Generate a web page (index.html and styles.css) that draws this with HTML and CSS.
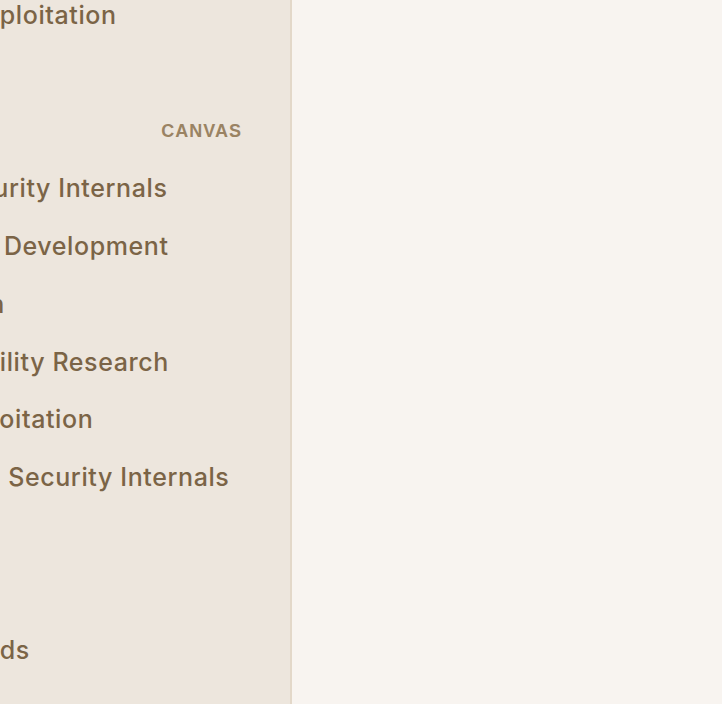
FILE: index.html
```html
<!DOCTYPE html>
<html lang="en">
<head>
<meta charset="utf-8">
<title>Sidebar</title>
<link rel="stylesheet" href="styles.css">
</head>
<body>
<div class="app">
  <aside class="sidebar">
    <nav class="nav">
      <section class="section">
        <a class="item">Hypervisor Exploitation</a>
      </section>
      <section class="section">
        <div class="heading">Canvas</div>
        <a class="item">Windows Security Internals</a>
        <a class="item">Kernel Exploit Development</a>
        <a class="item">Code Injection</a>
        <a class="item">Web Vulnerability Research</a>
        <a class="item">Windows Exploitation</a>
        <a class="item">macOS Kernel Security Internals</a>
      </section>
      <section class="section">
        <a class="item">Notes</a>
        <a class="item">Exploit Payloads</a>
      </section>
    </nav>
  </aside>
  <main class="main"></main>
</div>
</body>
</html>
```
FILE: styles.css
```css
html, body {
  margin: 0;
  padding: 0;
  height: 100%;
}
body {
  font-family: Inter, "Noto Sans", sans-serif;
  background: #f8f4f0;
  overflow: hidden;
}
.app {
  display: flex;
  height: 100vh;
}
.sidebar {
  width: 290px;
  flex: none;
  background: #ede6dd;
  border-right: 2px solid #e3d8c9;
  overflow: hidden;
}
.nav {
  margin-left: -176px;
  margin-top: -12.9px;
}
.section + .section {
  margin-top: 57.75px;
}
.item {
  display: block;
  white-space: nowrap;
  font-size: 25px;
  font-weight: 500;
  letter-spacing: 0.6px;
  line-height: 57.75px;
  color: #7b6446;
  text-decoration: none;
}
.heading {
  font-family: "Liberation Sans", Arial, sans-serif;
  font-weight: 700;
  font-size: 18px;
  letter-spacing: 1px;
  line-height: 57.75px;
  text-transform: uppercase;
  text-align: right;
  padding-right: 48px;
  color: #9a8363;
}
.main {
  flex: 1;
  background: #f8f4f0;
}
```
